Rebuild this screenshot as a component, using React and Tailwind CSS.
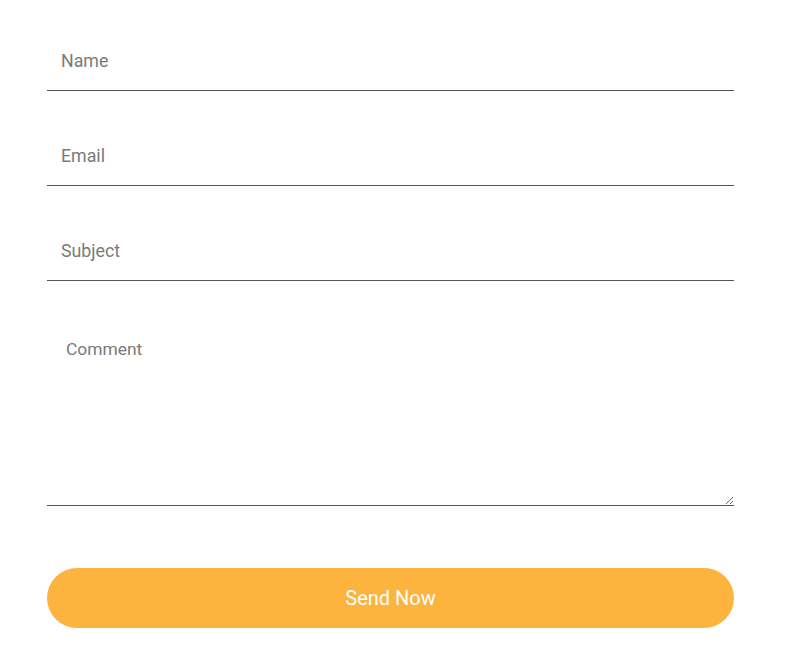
const fields = ["Name", "Email", "Subject"]

const App = () => {
  return (
    <div className="min-h-[670px] w-full bg-white font-['Roboto',sans-serif]">
      <form className="ml-[47px] w-[687px] pt-[31px]" onSubmit={(e) => e.preventDefault()}>
        {fields.map((f) => (
          <input
            key={f}
            type="text"
            placeholder={f}
            className="mb-[35px] block h-[60px] w-full border-b border-[#555] bg-transparent pl-[14px] text-[17.8px] text-[#333] placeholder:text-[#7a7a7a] outline-none"
          />
        ))}
        <textarea
          placeholder="Comment"
          className="block h-[190px] w-full border-b border-[#555] bg-transparent pl-[19px] pt-[20px] text-[17.4px] text-[#333] placeholder:text-[#7a7a7a] outline-none"
        />
        <button
          type="submit"
          className="mt-[62px] block h-[60px] w-full rounded-full bg-[#fdb43e] text-[20px] font-normal text-white"
        >
          Send Now
        </button>
      </form>
    </div>
  )
}

export default App
